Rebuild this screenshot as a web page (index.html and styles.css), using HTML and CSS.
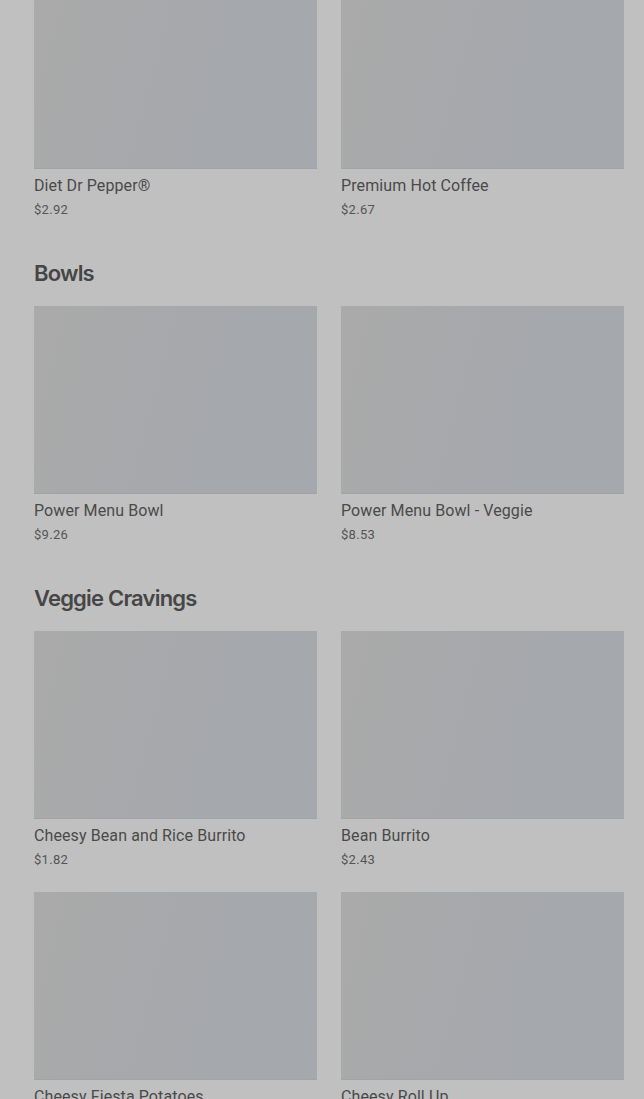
FILE: index.html
```html
<!DOCTYPE html>
<html lang="en">

<head>
    <meta charset="UTF-8">
    <meta name="viewport" content="width=device-width, initial-scale=1.0">
    <title>Menu</title>
    <link rel="stylesheet" href="styles.css">
</head>

<body>
    <div class="menu">
        <!-- 饮料，已经滚动出一部分 -->
        <section class="section first">
            <div class="grid">
                <div class="item">
                    <div class="pic"></div>
                    <p class="name">Diet Dr Pepper®</p>
                    <p class="price">$2.92</p>
                </div>
                <div class="item">
                    <div class="pic"></div>
                    <p class="name">Premium Hot Coffee</p>
                    <p class="price">$2.67</p>
                </div>
            </div>
        </section>

        <section class="section">
            <h2 class="title">Bowls</h2>
            <div class="grid">
                <div class="item">
                    <div class="pic"></div>
                    <p class="name">Power Menu Bowl</p>
                    <p class="price">$9.26</p>
                </div>
                <div class="item">
                    <div class="pic"></div>
                    <p class="name">Power Menu Bowl - Veggie</p>
                    <p class="price">$8.53</p>
                </div>
            </div>
        </section>

        <section class="section">
            <h2 class="title">Veggie Cravings</h2>
            <div class="grid">
                <div class="item">
                    <div class="pic"></div>
                    <p class="name">Cheesy Bean and Rice Burrito</p>
                    <p class="price">$1.82</p>
                </div>
                <div class="item">
                    <div class="pic"></div>
                    <p class="name">Bean Burrito</p>
                    <p class="price">$2.43</p>
                </div>
                <div class="item">
                    <div class="pic"></div>
                    <p class="name">Cheesy Fiesta Potatoes</p>
                </div>
                <div class="item">
                    <div class="pic"></div>
                    <p class="name">Cheesy Roll Up</p>
                </div>
            </div>
        </section>
    </div>
</body>

</html>
```

FILE: styles.css
```css
* {
    margin: 0;
    padding: 0;
    box-sizing: border-box;
}

html,
body {
    height: 100%;
    overflow: hidden;
}

body {
    background-color: #c0c0c0;
    font-family: Roboto, "Liberation Sans", sans-serif;
    color: #4a4a4a;
}

.menu {
    padding: 0 20px 0 34px;
    /* 页面已经往下滚了一点 */
    margin-top: -19px;
}

.section {
    padding-top: 40px;
}

.section.first {
    padding-top: 0;
}

.title {
    font-family: Inter, "Noto Sans", sans-serif;
    font-size: 22px;
    font-weight: 600;
    line-height: 28px;
    letter-spacing: -0.8px;
    color: #464646;
    margin-bottom: 19px;
}

.grid {
    display: grid;
    grid-template-columns: 1fr 1fr;
    column-gap: 24px;
    row-gap: 23px;
}

.pic {
    height: 188px;
    background: linear-gradient(105deg, #aaaaaa 0%, #a8a9aa 25%, #a6a8ac 45%, #a5a8ac 100%);
    border-bottom: 1px solid #a2a3a5;
}

.name {
    margin-top: 7px;
    font-size: 16px;
    line-height: 20px;
    letter-spacing: 0.1px;
    color: #4a4a4a;
}

.price {
    margin-top: 5px;
    font-size: 13px;
    line-height: 18px;
    letter-spacing: 0.3px;
    color: #555555;
}
```
